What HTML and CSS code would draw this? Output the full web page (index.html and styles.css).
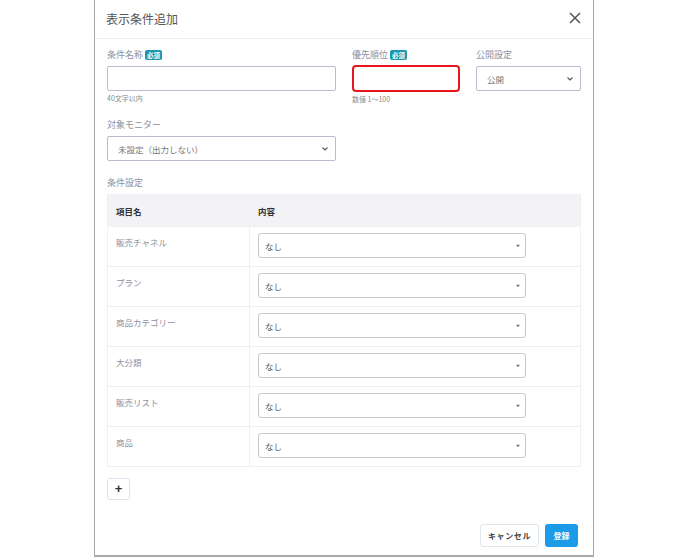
FILE: index.html
```html
<!DOCTYPE html>
<html lang="ja">
<head>
    <meta charset="UTF-8">
    <title>表示条件追加</title>
    <link rel="stylesheet" href="styles.css">
</head>
<body>
    <div class="modal">
        <div class="modal-header">
            <h2 class="modal-title">表示条件追加</h2>
            <svg class="close" width="14" height="14" viewBox="0 0 14 14"><path d="M2 2L12 12M12 2L2 12" stroke="#555" stroke-width="1.5" fill="none"/></svg>
        </div>
        <div class="modal-body">
            <div class="form-row">
                <div class="field">
                    <div class="label">条件名称 <span class="badge">必須</span></div>
                    <div class="input"></div>
                    <div class="hint">40文字以内</div>
                </div>
                <div class="field">
                    <div class="label">優先順位 <span class="badge">必須</span></div>
                    <div class="input error"></div>
                    <div class="hint">数値 1〜100</div>
                </div>
                <div class="field">
                    <div class="label">公開設定</div>
                    <div class="input select">
                        <span>公開</span>
                        <svg width="8" height="6" viewBox="0 0 8 6"><path d="M1.5 1.5L4 4L6.5 1.5" stroke="#555" stroke-width="1.1" fill="none"/></svg>
                    </div>
                </div>
            </div>

            <div class="field monitor">
                <div class="label">対象モニター</div>
                <div class="input select">
                    <span>未設定（出力しない）</span>
                    <svg width="8" height="6" viewBox="0 0 8 6"><path d="M1.5 1.5L4 4L6.5 1.5" stroke="#555" stroke-width="1.1" fill="none"/></svg>
                </div>
            </div>

            <div class="label section">条件設定</div>
            <table class="cond-table">
                <thead>
                    <tr><th class="col-name">項目名</th><th>内容</th></tr>
                </thead>
                <tbody id="rows"></tbody>
            </table>

            <button class="add-btn">+</button>
        </div>
        <div class="modal-footer">
            <button class="btn btn-cancel">キャンセル</button>
            <button class="btn btn-primary">登録</button>
        </div>
    </div>

    <script>
        const items = ["販売チャネル", "プラン", "商品カテゴリー", "大分類", "販売リスト", "商品"];
        const rows = document.getElementById("rows");
        items.forEach(name => {
            const tr = document.createElement("tr");
            tr.innerHTML = `<td class="col-name">${name}</td>
                <td><div class="dropdown"><span>なし</span>
                <svg width="6" height="4" viewBox="0 0 6 4"><polygon points="1,0.8 5,0.8 3,3.2" fill="#777"/></svg></div></td>`;
            rows.appendChild(tr);
        });
    </script>
</body>
</html>
```

FILE: styles.css
```css
* { margin: 0; padding: 0; box-sizing: border-box; }
body { background: #fff; font-family: "Noto Sans CJK JP", "Noto Sans", sans-serif; color: #444; }

.modal { width: 500px; height: 557px; margin-left: 94px; border: 1px solid #a8a8a8; border-top: none; border-bottom-width: 2px; display: flex; flex-direction: column; background: #fff; }

.modal-header { height: 39px; display: flex; align-items: center; justify-content: space-between; padding: 0 11px 1px 11px; border-bottom: 1px solid #eef0f5; }
.modal-title { font-size: 12px; font-weight: normal; color: #555; }
.close { margin-top: -2px; }

.modal-body { flex: 1; padding: 9px 12px 0 12px; }

.form-row { display: grid; grid-template-columns: 229px 108px 1fr; column-gap: 16px; }
.label { font-size: 9px; color: #8e90a2; height: 14px; line-height: 14px; display: flex; align-items: center; gap: 2px; margin-bottom: 4px; }
.badge { background: #1b98b0; color: #fff; font-size: 6.5px; font-weight: bold; padding: 0 2px; border-radius: 2px; line-height: 10px; }

.input { height: 25px; border: 1px solid #b9bccd; border-radius: 2px; background: #fff; }
.input.error { border: 2px solid #e8161c; border-radius: 4px; margin-top: -1px; height: 27px; }
.select { display: flex; align-items: center; justify-content: space-between; padding: 0 6px 0 10px; font-size: 8.5px; color: #777; }

.hint { font-size: 7px; line-height: 10px; color: #8a8a8a; margin-top: 2px; }

.monitor { width: 229px; margin-top: 14px; }

.section { margin-top: 15px; margin-bottom: 4px; }

.cond-table { width: 474px; border-collapse: collapse; font-size: 8.5px; }
.cond-table th { background: #f3f3f5; height: 32px; text-align: left; font-weight: bold; color: #333; padding: 0 8px; border: 1px solid #f0f1f6; }
.cond-table td { height: 40px; border: 1px solid #eef0f7; vertical-align: top; padding: 6px 8px 0 8px; }
.cond-table td.col-name { color: #8e90a2; padding-top: 9px; }
.col-name { width: 142px; }

.dropdown { width: 268px; height: 25px; border: 1px solid #c9c9c9; border-radius: 3px; display: flex; align-items: center; justify-content: space-between; padding: 0 4px 0 6px; color: #555; }

.add-btn { margin-top: 11px; width: 23px; height: 22px; border: 1px solid #dfe2ec; border-radius: 3px; background: #fff; font-size: 13px; font-weight: bold; color: #333; line-height: 18px; font-family: "Liberation Sans", sans-serif; }

.modal-footer { display: flex; justify-content: flex-end; gap: 6px; padding: 0 15px 8px 0; }
.btn { height: 23px; border-radius: 3px; font-size: 8px; font-family: "Noto Sans CJK JP", sans-serif; font-weight: bold; padding: 0; white-space: nowrap; }
.btn-cancel { width: 59px; border: 1px solid #dfe4ee; background: #fff; color: #444; letter-spacing: 0.6px; }
.btn-primary { width: 33px; border: none; background: #1c9be9; color: #fff; }
```
